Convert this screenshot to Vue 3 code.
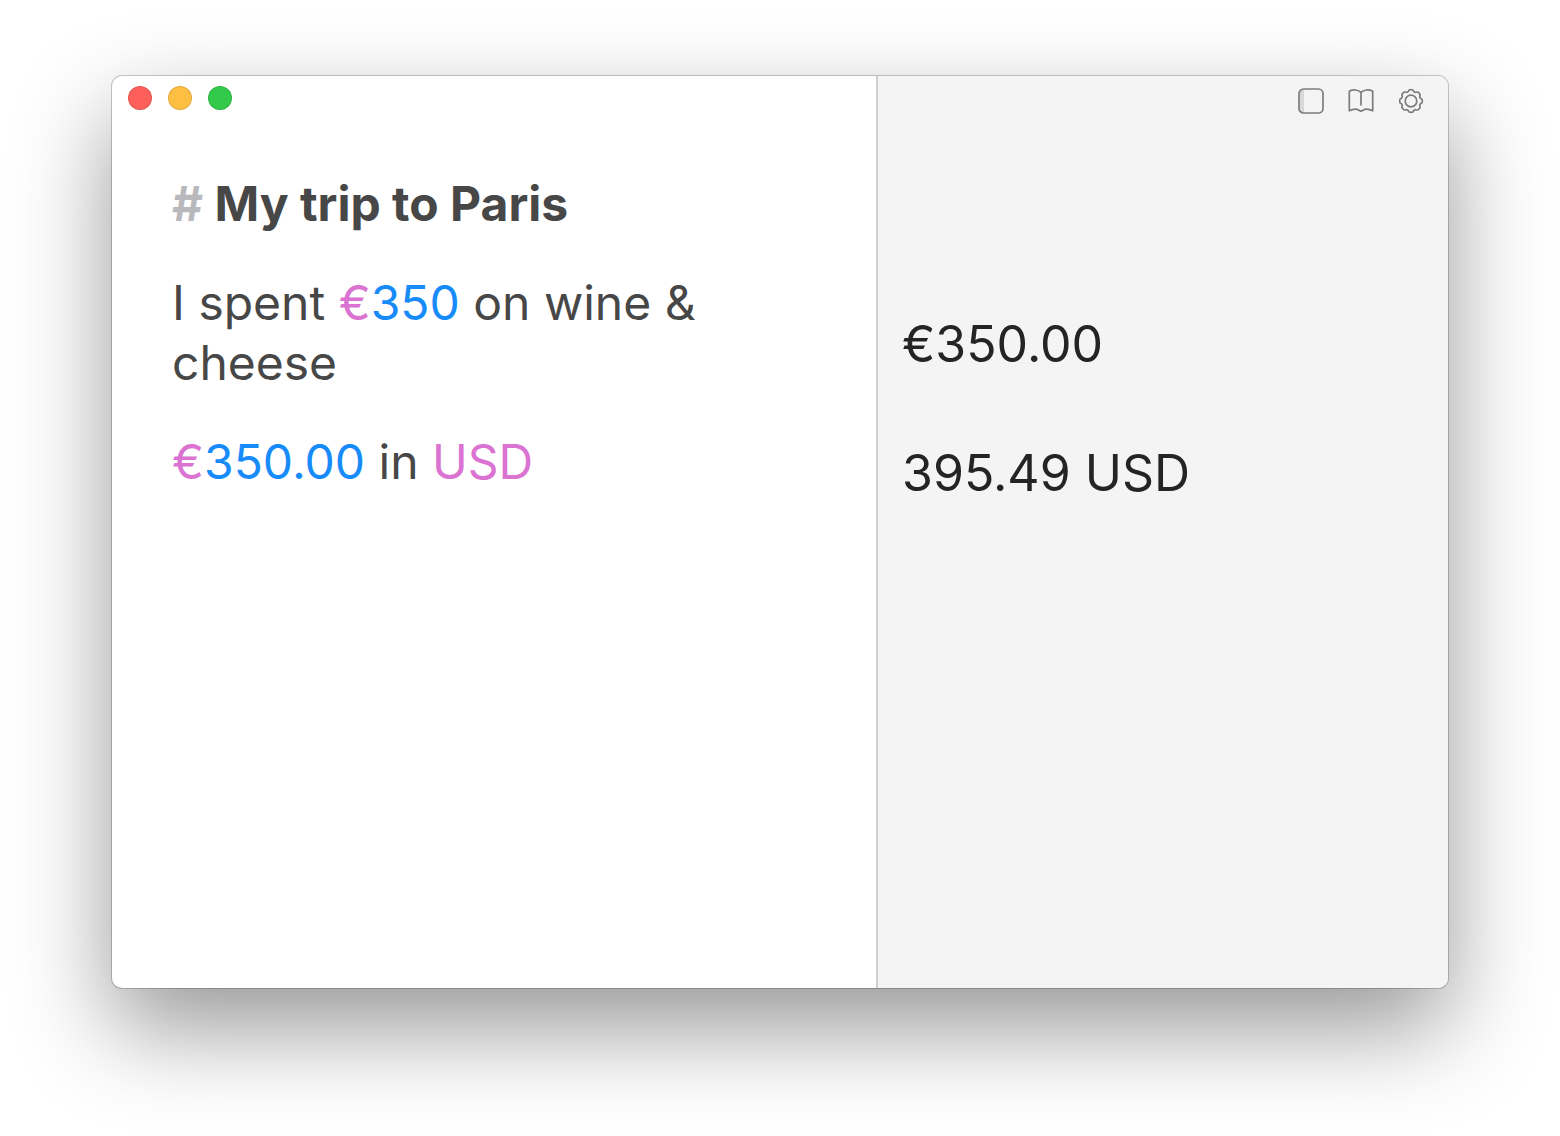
<template>
    <div class="desktop">
        <main class="window">
            <section class="editor">
                <div class="traffic_lights">
                    <button v-for="light in lights" :key="light.name" type="button" class="light" :class="light.name"
                        :aria-label="light.label"></button>
                </div>
                <div class="note">
                    <h1 class="line"><span class="mark">#</span> My trip to Paris</h1>
                    <p v-for="(line, index) in lines" :key="index" class="line">
                        <span v-for="(token, i) in line" :key="i" :class="token.type">{{ token.text }}</span>
                    </p>
                </div>
            </section>
            <aside class="results">
                <div class="toolbar">
                    <button type="button" class="tool_btn" aria-label="Toggle sidebar">
                        <svg viewBox="0 0 26 26">
                            <path class="shade" d="M5 1.5H6V24.5H5Q1.5 24.5 1.5 20.5V5.5Q1.5 1.5 5 1.5Z" />
                            <rect x="1" y="1" width="24" height="24" rx="4.5" />
                        </svg>
                    </button>
                    <button type="button" class="tool_btn" aria-label="Documentation">
                        <svg viewBox="0 0 26 26">
                            <path
                                d="M13 17.5V4.5C10.5 1.5 5 1.2 1.3 3.2V22.8C5 20.8 9 20.8 11 22.2Q13 24.2 15 22.2C17 20.8 21 20.8 24.7 22.8V3.2C21 1.2 15.5 1.5 13 4.5" />
                        </svg>
                    </button>
                    <button type="button" class="tool_btn" aria-label="Settings">
                        <svg viewBox="0 0 26 26">
                            <path :d="gearPath" />
                            <circle cx="13" cy="13" r="5.8" />
                        </svg>
                    </button>
                </div>
                <div class="answers">
                    <output v-for="answer in answers" :key="answer" class="line">{{ answer }}</output>
                </div>
            </aside>
        </main>
    </div>
</template>

<script setup>
import { ref } from 'vue';

const lights = [
    { name: 'close', label: 'Close' },
    { name: 'minimize', label: 'Minimize' },
    { name: 'zoom', label: 'Zoom' }
];

const lines = ref([
    [
        { type: 'text', text: 'I spent ' },
        { type: 'unit', text: '€' },
        { type: 'number', text: '350' },
        { type: 'text', text: ' on wine & ' },
        { type: 'text', text: 'cheese' }
    ],
    [
        { type: 'unit', text: '€' },
        { type: 'number', text: '350.00' },
        { type: 'text', text: ' in ' },
        { type: 'unit', text: 'USD' }
    ]
]);

const answers = ref(['€350.00', '395.49 USD']);

// gear outline with eight rounded teeth
const gearPoints = [];
for (let deg = 0; deg < 360; deg += 3) {
    const rad = (deg * Math.PI) / 180;
    const wave = Math.cos(rad * 8);
    const radius = 10.4 + 0.9 * Math.tanh(wave * 1.8 + 0.6);
    gearPoints.push(`${(13 + radius * Math.cos(rad)).toFixed(2)} ${(13 + radius * Math.sin(rad)).toFixed(2)}`);
}
const gearPath = `M${gearPoints.join('L')}Z`;
</script>

<style>
body {
    margin: 0;
    background: #fff;
}
</style>

<style scoped>
.desktop {
    display: flex;
    box-sizing: border-box;
    min-height: 100vh;
    padding: 76px 112px 148px;
    font-family: Inter, "Liberation Sans", sans-serif;
}

.window {
    display: grid;
    grid-template-columns: 764fr 572fr;
    flex: 1;
    border-radius: 10px;
    overflow: hidden;
    background: #fff;
    box-shadow: 0 0 0 1px rgba(0, 0, 0, 0.2), 0 40px 96px rgba(0, 0, 0, 0.41);
}

.editor {
    padding: 10px 60px 60px 16px;
}

.traffic_lights {
    display: flex;
    gap: 16px;
}

.light {
    width: 24px;
    height: 24px;
    padding: 0;
    border: 1px solid rgba(0, 0, 0, 0.1);
    border-radius: 50%;
}

.close {
    background: #fd5f5b;
}

.minimize {
    background: #fdbe41;
}

.zoom {
    background: #33c94a;
}

.note {
    display: flex;
    flex-direction: column;
    gap: 39px;
    padding: 64px 0 0 44px;
    font-size: 48px;
    color: #474747;
}

.line {
    margin: 0;
    font-size: inherit;
    line-height: 60px;
}

.mark {
    color: #b9b9bd;
}

.unit {
    color: #da73d1;
}

.number {
    color: #178bfa;
}

.results {
    border-left: 2px solid #d0d0d0;
    background: #f4f4f4;
}

.toolbar {
    display: flex;
    justify-content: flex-end;
    gap: 24px;
    padding: 12px 24px 0;
}

.tool_btn {
    width: 26px;
    height: 26px;
    padding: 0;
    border: 0;
    background: none;
}

.tool_btn svg {
    display: block;
    fill: none;
    stroke: #7c7c7c;
    stroke-width: 1.7;
    stroke-linejoin: round;
}

.tool_btn .shade {
    fill: #d8d8d8;
    stroke: none;
}

.answers {
    display: flex;
    flex-direction: column;
    gap: 69px;
    padding: 200px 24px 60px;
    font-size: 50px;
    color: #242424;
}
</style>
